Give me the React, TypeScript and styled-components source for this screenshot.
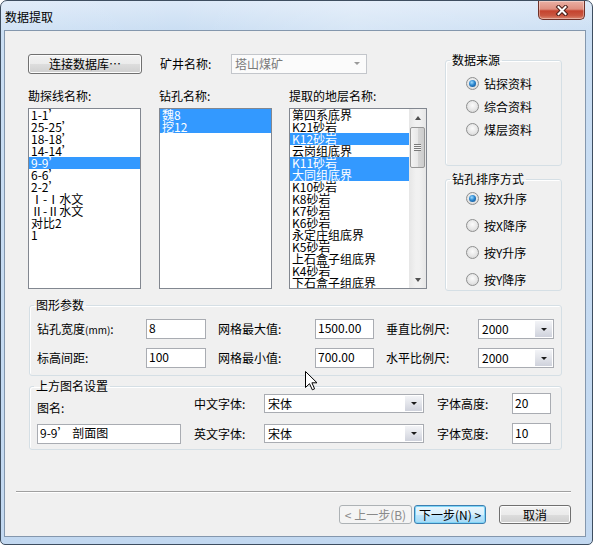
import React from 'react';
import styled, { createGlobalStyle, css } from 'styled-components';

const uiFont = `"Noto Sans CJK SC", "Liberation Sans", sans-serif`;

const GlobalStyle = createGlobalStyle`
    html, body {
        margin: 0;
        padding: 0;
        background: #ffffff;
    }
    body {
        font-family: ${uiFont};
        font-size: 12px;
        color: #000000;
    }
    * {
        box-sizing: border-box;
    }
`;

const Window = styled.div`
    position: relative;
    width: 593px;
    height: 545px;
    display: flex;
    flex-direction: column;
    border: 1px solid #3e4e60;
    border-radius: 7px 7px 5px 5px;
    background: linear-gradient(180deg, #dce9f8 0px, #cadef3 30px, #c2d8f0 100%);
    overflow: hidden;
`;

const TitleBar = styled.div`
    height: 29px;
    flex: none;
    display: flex;
    justify-content: space-between;
    align-items: flex-start;
    background: linear-gradient(90deg, rgba(255, 255, 255, 0.15), rgba(255, 255, 255, 0) 30%, rgba(255, 255, 255, 0.25) 60%, rgba(255, 255, 255, 0.05));
`;

const Title = styled.span`
    padding: 1px 0 0 4px;
    line-height: 29px;
    font-size: 12px;
    color: #000000;
`;

const CloseButton = styled.div`
    width: 47px;
    height: 19px;
    margin-right: 7px;
    border: 1px solid #6e3128;
    border-top: none;
    border-radius: 0 0 5px 5px;
    background: linear-gradient(180deg, #eab0a4 0%, #df8f80 45%, #c5432e 55%, #c95640 80%, #dc8770 100%);
    box-shadow: inset 0 0 0 1px rgba(255, 255, 255, 0.35);
    display: flex;
    align-items: center;
    justify-content: center;
`;

const Client = styled.div`
    margin: 0 6px 0 3px;
    height: 507px;
    flex: none;
    border: 1px solid #8497ad;
    background: #f0f0f0;
    display: flex;
    flex-direction: column;
`;

const TopArea = styled.div`
    display: flex;
    padding: 22px 0 0 23px;
    gap: 18px;
`;

const LeftPane = styled.div`
    width: 399px;
    display: flex;
    flex-direction: column;
`;

const TopRow = styled.div`
    height: 21px;
    display: flex;
    align-items: center;
`;

const Label = styled.span<{ $width?: number }>`
    font-size: 12px;
    line-height: 14px;
    white-space: nowrap;
    ${p => p.$width !== undefined && css`
        width: ${p.$width}px;
        flex: none;
    `}
`;

const Unit = styled.span`
    font-size: 10px;
`;

const ListsGrid = styled.div`
    margin-top: 15px;
    display: grid;
    grid-template-columns: 131px 130px 138px;
    grid-template-rows: 14px 181px;
    row-gap: 5px;
`;

const ListBox = styled.div<{ $width: number }>`
    width: ${p => p.$width}px;
    height: 181px;
    border: 1px solid #828790;
    background: #ffffff;
    display: flex;
    overflow: hidden;
`;

const ListItems = styled.div`
    flex: 1;
    min-width: 0;
    display: flex;
    flex-direction: column;
`;

const ListItem = styled.div<{ $selected?: boolean }>`
    height: 12px;
    flex: none;
    line-height: 12px;
    font-size: 12px;
    padding-left: 2px;
    white-space: nowrap;
    background: ${p => (p.$selected ? '#3399ff' : 'transparent')};
    color: ${p => (p.$selected ? '#ffffff' : '#000000')};
`;

const ScrollBar = styled.div`
    width: 17px;
    flex: none;
    display: flex;
    flex-direction: column;
    background: linear-gradient(90deg, #e6e6e6, #f1f1f1 40%, #f1f1f1 60%, #e6e6e6);
`;

const ScrollArrow = styled.div<{ $dir: 'up' | 'down' }>`
    height: 17px;
    flex: none;
    display: flex;
    align-items: center;
    justify-content: center;
    &::after {
        content: '';
        border-left: 3.5px solid transparent;
        border-right: 3.5px solid transparent;
        ${p => (p.$dir === 'up'
            ? css`border-bottom: 4px solid #505050;`
            : css`border-top: 4px solid #505050;`)}
    }
`;

const ScrollThumb = styled.div`
    margin: 1px 1px 0 1px;
    height: 41px;
    flex: none;
    border: 1px solid #979797;
    border-radius: 2px;
    background: linear-gradient(90deg, #f3f3f3, #e8e8e8 50%, #d7d7d7 51%, #cdcdcd);
    display: flex;
    align-items: center;
    justify-content: center;
`;

const Grip = styled.div`
    width: 7px;
    height: 7px;
    background: repeating-linear-gradient(180deg, #7a7a7a 0px, #7a7a7a 1px, #f4f4f4 1px, #f4f4f4 2px);
`;

const ScrollSpacer = styled.div`
    flex: 1;
`;

const RightPane = styled.div`
    width: 117px;
    display: flex;
    flex-direction: column;
`;

const GroupBox = styled.fieldset<{ $height?: number; $top?: number }>`
    margin: ${p => p.$top ?? 0}px 0 0 0;
    padding: 0;
    min-width: 0;
    border: 1px solid #d5dfe5;
    border-radius: 3px;
    box-shadow: inset 1px 1px 0 #ffffff;
    ${p => p.$height !== undefined && css`
        height: ${p.$height}px;
    `}
`;

const Legend = styled.legend`
    margin-left: 4px;
    padding: 0 2px;
    font-size: 12px;
    line-height: 14px;
`;

const RadioList = styled.div<{ $gap: number; $top: number }>`
    display: flex;
    flex-direction: column;
    gap: ${p => p.$gap}px;
    padding: ${p => p.$top}px 0 0 20px;
`;

const RadioRow = styled.label`
    height: 13px;
    display: flex;
    align-items: center;
    gap: 5px;
    font-size: 12px;
    line-height: 13px;
    white-space: nowrap;
`;

const RadioMark = styled.span<{ $checked?: boolean }>`
    position: relative;
    width: 13px;
    height: 13px;
    flex: none;
    border-radius: 50%;
    border: 1px solid #8e8f8f;
    background: radial-gradient(circle at 50% 40%, #fbfbfb 0, #e6e6e6 55%, #cdcdcd 100%);
    ${p => p.$checked && css`
        &::after {
            content: '';
            position: absolute;
            left: 2px;
            top: 2px;
            width: 7px;
            height: 7px;
            border-radius: 50%;
            background: radial-gradient(circle at 40% 35%, #9fdcff 0, #2b86cf 45%, #0c4580 100%);
        }
    `}
`;

const ParamGrid = styled.div`
    display: grid;
    grid-template-columns: 97px 60px 85px 59px 80px 76px;
    grid-template-rows: 20px 20px;
    column-gap: 12px;
    row-gap: 9px;
    align-items: center;
    padding: 7px 0 7px 7px;
`;

const NameGrid = styled.div`
    display: grid;
    grid-template-columns: 144px 57px 160px 62px 39px;
    grid-template-rows: 21px 21px;
    column-gap: 13px;
    row-gap: 9px;
    align-items: center;
    padding: 0 0 5px 7px;
`;

const TextBox = styled.input<{ $height?: number }>`
    width: 100%;
    height: ${p => p.$height ?? 20}px;
    margin: 0;
    padding: 0 2px 3px 2px;
    border: 1px solid #a9acb2;
    background: #ffffff;
    font-family: ${uiFont};
    font-size: 12px;
    color: #000000;
    outline: none;
`;

const NameLabel = styled(Label)`
    align-self: end;
    line-height: 12px;
`;

const Combo = styled.div<{ $width?: number; $height?: number; $disabled?: boolean }>`
    width: ${p => (p.$width !== undefined ? `${p.$width}px` : '100%')};
    height: ${p => p.$height ?? 20}px;
    flex: none;
    display: flex;
    border: 1px solid ${p => (p.$disabled ? '#c3c6cb' : '#a9acb2')};
    background: ${p => (p.$disabled ? '#fbfbfb' : '#ffffff')};
    color: ${p => (p.$disabled ? '#7a7a7a' : '#000000')};
`;

const ComboText = styled.span`
    flex: 1;
    padding-left: 3px;
    font-size: 12px;
    line-height: 17px;
    white-space: nowrap;
`;

const ComboArrow = styled.span<{ $flat?: boolean }>`
    width: 17px;
    flex: none;
    margin: 1px;
    display: flex;
    align-items: center;
    justify-content: center;
    background: ${p => (p.$flat ? 'transparent' : 'linear-gradient(180deg, #f3f4f7 0%, #e2e4ea 50%, #cfd2dc 100%)')};
    &::after {
        content: '';
        border-left: 3px solid transparent;
        border-right: 3px solid transparent;
        border-top: 3px solid ${p => (p.$flat ? '#9a9a9a' : '#1a1a1a')};
    }
`;

const Separator = styled.div`
    margin: 41px 14px 0 11px;
    border-top: 1px solid #a0a0a0;
    border-bottom: 1px solid #ffffff;
`;

const ButtonRow = styled.div`
    margin-top: 12px;
    display: flex;
    justify-content: flex-end;
    padding-right: 14px;
`;

type ButtonKind = 'normal' | 'default' | 'disabled';

const PushButton = styled.button<{ $width: number; $kind?: ButtonKind; $gap?: number; $height?: number }>`
    width: ${p => p.$width}px;
    height: ${p => p.$height ?? 19}px;
    margin: 0 0 0 ${p => p.$gap ?? 0}px;
    padding: 0;
    flex: none;
    font-family: ${uiFont};
    font-size: 12px;
    line-height: 16px;
    border-radius: 3px;
    color: #000000;
    border: 1px solid #707070;
    background: linear-gradient(180deg, #f2f2f2 0%, #ebebeb 50%, #dddddd 51%, #cfcfcf 100%);
    box-shadow: inset 0 0 0 1px #fcfcfc;
    ${p => p.$kind === 'default' && css`
        border-color: #3c7fb1;
        background: linear-gradient(180deg, #eaf6fd 0%, #d9f0fc 50%, #bee6fd 51%, #a7d9f5 100%);
        box-shadow: inset 0 0 0 1px #7fd5f7;
    `}
    ${p => p.$kind === 'disabled' && css`
        border-color: #adb2b5;
        background: #f4f4f4;
        box-shadow: none;
        color: #8a8a8a;
    `}
`;

const Cursor = styled.svg`
    position: absolute;
    left: 304px;
    top: 370px;
`;

const exploreLines = ['1-1’', '25-25’', '18-18’', '14-14’', '9-9’', '6-6’', '2-2’', 'Ⅰ-Ⅰ水文', 'Ⅱ-Ⅱ水文', '对比2', '1'];
const boreholes = ['魏8', '挖12'];
const strata = [
    '第四系底界', 'K21砂岩', 'K12砂岩', '云岗组底界', 'K11砂岩', '大同组底界', 'K10砂岩', 'K8砂岩',
    'K7砂岩', 'K6砂岩', '永定庄组底界', 'K5砂岩', '上石盒子组底界', 'K4砂岩', '下石盒子组底界',
];
const selectedStrata = [2, 4, 5];

const Radio = ({ label, checked }: { label: string; checked?: boolean }) => (
    <RadioRow>
        <RadioMark $checked={checked} />
        {label}
    </RadioRow>
);

export default function App() {
    return (
        <>
            <GlobalStyle />
            <Window>
                <TitleBar>
                    <Title>数据提取</Title>
                    <CloseButton>
                        <svg width="14" height="11" viewBox="0 0 14 11">
                            <path d="M3.5 2 L10.5 9 M10.5 2 L3.5 9" stroke="#4a1d16" strokeWidth="4" strokeLinecap="square" />
                            <path d="M3.5 2 L10.5 9 M10.5 2 L3.5 9" stroke="#ffffff" strokeWidth="2" strokeLinecap="square" />
                        </svg>
                    </CloseButton>
                </TitleBar>
                <Client>
                    <TopArea>
                        <LeftPane>
                            <TopRow>
                                <PushButton $width={114} $height={20}>连接数据库…</PushButton>
                                <Label $width={71} style={{ marginLeft: 18 }}>矿井名称:</Label>
                                <Combo $width={136} $disabled>
                                    <ComboText>塔山煤矿</ComboText>
                                    <ComboArrow $flat />
                                </Combo>
                            </TopRow>
                            <ListsGrid>
                                <Label>勘探线名称:</Label>
                                <Label>钻孔名称:</Label>
                                <Label>提取的地层名称:</Label>
                                <ListBox $width={113}>
                                    <ListItems>
                                        {exploreLines.map((name, i) => (
                                            <ListItem key={name} $selected={i === 4}>{name}</ListItem>
                                        ))}
                                    </ListItems>
                                </ListBox>
                                <ListBox $width={113}>
                                    <ListItems>
                                        {boreholes.map(name => (
                                            <ListItem key={name} $selected>{name}</ListItem>
                                        ))}
                                    </ListItems>
                                </ListBox>
                                <ListBox $width={138}>
                                    <ListItems>
                                        {strata.map((name, i) => (
                                            <ListItem key={name} $selected={selectedStrata.includes(i)}>{name}</ListItem>
                                        ))}
                                    </ListItems>
                                    <ScrollBar>
                                        <ScrollArrow $dir="up" />
                                        <ScrollThumb>
                                            <Grip />
                                        </ScrollThumb>
                                        <ScrollSpacer />
                                        <ScrollArrow $dir="down" />
                                    </ScrollBar>
                                </ListBox>
                            </ListsGrid>
                        </LeftPane>
                        <RightPane>
                            <GroupBox $height={113}>
                                <Legend>数据来源</Legend>
                                <RadioList $gap={10} $top={9.5}>
                                    <Radio label="钻探资料" checked />
                                    <Radio label="综合资料" />
                                    <Radio label="煤层资料" />
                                </RadioList>
                            </GroupBox>
                            <GroupBox $height={119} $top={6}>
                                <Legend>钻孔排序方式</Legend>
                                <RadioList $gap={14} $top={5.5}>
                                    <Radio label="按X升序" checked />
                                    <Radio label="按X降序" />
                                    <Radio label="按Y升序" />
                                    <Radio label="按Y降序" />
                                </RadioList>
                            </GroupBox>
                        </RightPane>
                    </TopArea>

                    <GroupBox $top={7} style={{ marginLeft: 24, width: 533 }}>
                        <Legend>图形参数</Legend>
                        <ParamGrid>
                            <Label>钻孔宽度<Unit>(mm)</Unit>:</Label>
                            <TextBox defaultValue="8" />
                            <Label>网格最大值:</Label>
                            <TextBox defaultValue="1500.00" />
                            <Label>垂直比例尺:</Label>
                            <Combo>
                                <ComboText>2000</ComboText>
                                <ComboArrow />
                            </Combo>
                            <Label>标高间距:</Label>
                            <TextBox defaultValue="100" />
                            <Label>网格最小值:</Label>
                            <TextBox defaultValue="700.00" />
                            <Label>水平比例尺:</Label>
                            <Combo>
                                <ComboText>2000</ComboText>
                                <ComboArrow />
                            </Combo>
                        </ParamGrid>
                    </GroupBox>

                    <GroupBox $top={3} style={{ marginLeft: 24, width: 533 }}>
                        <Legend>上方图名设置</Legend>
                        <NameGrid>
                            <NameLabel>图名:</NameLabel>
                            <Label>中文字体:</Label>
                            <Combo $height={19}>
                                <ComboText>宋体</ComboText>
                                <ComboArrow />
                            </Combo>
                            <Label>字体高度:</Label>
                            <TextBox defaultValue="20" $height={21} />
                            <TextBox defaultValue="9-9’ 剖面图" />
                            <Label>英文字体:</Label>
                            <Combo $height={19}>
                                <ComboText>宋体</ComboText>
                                <ComboArrow />
                            </Combo>
                            <Label>字体宽度:</Label>
                            <TextBox defaultValue="10" $height={21} />
                        </NameGrid>
                    </GroupBox>

                    <Separator />
                    <ButtonRow>
                        <PushButton $width={73} $kind="disabled">&lt; 上一步(B)</PushButton>
                        <PushButton $width={72} $kind="default" $gap={2}>下一步(N) &gt;</PushButton>
                        <PushButton $width={72} $gap={13}>取消</PushButton>
                    </ButtonRow>
                </Client>
                <Cursor width="13" height="20" viewBox="0 0 13 20">
                    <path d="M0.5 0.5 L0.5 16.5 L4.5 12.7 L7.3 18.8 L9.6 17.8 L6.9 11.8 L12 11.8 Z" fill="#ffffff" stroke="#000000" strokeWidth="1" strokeLinejoin="miter" />
                </Cursor>
            </Window>
        </>
    );
}
